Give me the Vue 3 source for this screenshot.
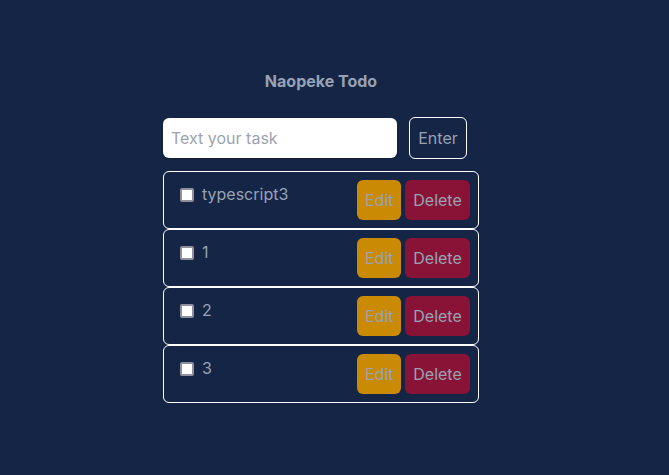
<script setup>
import { ref } from 'vue'

const draft = ref('')
const editing = ref(null)
const nextId = ref(5)
const tasks = ref([
  { id: 1, text: 'typescript3', done: false },
  { id: 2, text: '1', done: false },
  { id: 3, text: '2', done: false },
  { id: 4, text: '3', done: false },
])

function submit() {
  const text = draft.value.trim()
  if (!text) return
  const current = tasks.value.find((t) => t.id === editing.value)
  if (current) current.text = text
  else tasks.value.push({ id: nextId.value++, text, done: false })
  editing.value = null
  draft.value = ''
}

function edit(task) {
  editing.value = task.id
  draft.value = task.text
}

function remove(id) {
  tasks.value = tasks.value.filter((t) => t.id !== id)
}
</script>

<template>
  <main class="page">
    <section class="todo">
      <h1 class="title">Naopeke Todo</h1>
      <form class="entry" @submit.prevent="submit">
        <input v-model="draft" class="field" type="text" placeholder="Text your task" aria-label="Task" />
        <button class="btn enter" type="submit">Enter</button>
      </form>
      <ul class="list">
        <li v-for="task in tasks" :key="task.id" class="item">
          <label class="task">
            <input v-model="task.done" class="check" type="checkbox" />
            <span>{{ task.text }}</span>
          </label>
          <div class="actions">
            <button class="btn edit" type="button" @click="edit(task)">Edit</button>
            <button class="btn delete" type="button" @click="remove(task.id)">Delete</button>
          </div>
        </li>
      </ul>
    </section>
  </main>
</template>

<style>
body {
  margin: 0;
  background: #152546;
}
</style>

<style scoped>
.page {
  box-sizing: border-box;
  min-height: 100vh;
  display: flex;
  justify-content: center;
  align-items: center;
  padding: 16px 16px 20px;
  background: #152546;
  color: #97a2b4;
  font: 16px/24px Inter, sans-serif;
}
.todo {
  width: 100%;
  max-width: 316px;
  padding-right: 27px;
}
.title {
  margin: 0 0 24px;
  font-size: 16px;
  line-height: 24px;
  font-weight: 700;
  text-align: center;
}
.entry {
  display: flex;
  align-items: center;
  gap: 12px;
  padding-right: 12px;
  margin-bottom: 12px;
}
.field {
  box-sizing: border-box;
  flex: 1;
  min-width: 0;
  height: 40px;
  padding: 8px;
  border: 0;
  border-radius: 6px;
  background: #fff;
  box-shadow: 0 1px 2px rgb(0 0 0 / 0.2);
  color: #1e293b;
  font: inherit;
}
.field::placeholder {
  color: #9ca3af;
  opacity: 1;
}
.btn {
  padding: 8px;
  border: 0;
  border-radius: 6px;
  color: inherit;
  font: inherit;
  cursor: pointer;
}
.enter {
  width: 58px;
  border: 1px solid #fff;
  background: transparent;
}
.list {
  margin: 0;
  padding: 0;
  list-style: none;
}
.item {
  display: flex;
  justify-content: space-between;
  padding: 8px;
  border: 1px solid #fff;
  border-radius: 6px;
}
.task {
  display: flex;
  align-items: center;
  align-self: flex-start;
  gap: 8px;
  padding: 2px 8px;
}
.check {
  appearance: none;
  box-sizing: border-box;
  width: 14px;
  height: 14px;
  margin: 2px 0 0;
  border: 2px solid #8f8f9d;
  border-radius: 2px;
  background: #fff;
}
.check:checked {
  background: #0075ff;
}
.actions {
  display: flex;
  gap: 4px;
}
.edit {
  width: 44px;
  background: #ca8a04;
}
.delete {
  width: 65px;
  background: #881337;
}
</style>
